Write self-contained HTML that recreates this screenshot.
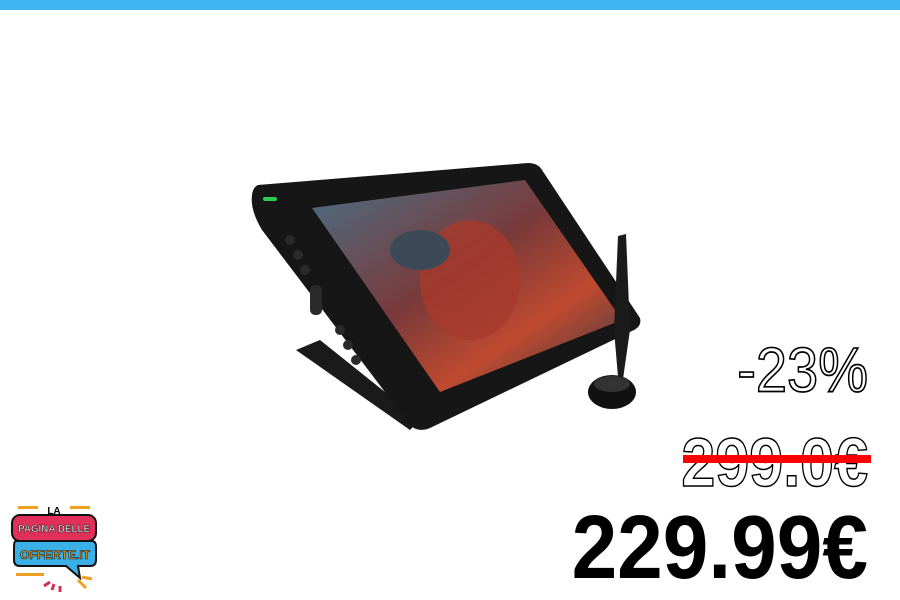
<!DOCTYPE html>
<html><head><style>
body{margin:0;width:900px;height:600px;background:#fff;overflow:hidden;position:relative;font-family:"Liberation Sans",sans-serif}
.bar{position:absolute;left:0;top:0;width:900px;height:10px;background:#3fb6f2}
.t{position:absolute;right:32px;font-weight:bold;color:#fff;-webkit-text-stroke:1.3px #000;text-align:right;white-space:nowrap;transform-origin:right top;line-height:1}
</style></head><body>
<div class="bar"></div>
<svg width="900" height="600" style="position:absolute;left:0;top:0">
<defs><linearGradient id="sc" x1="0" y1="0" x2="1" y2="1">
<stop offset="0" stop-color="#4a6f86"/><stop offset="0.45" stop-color="#7a3a3a"/><stop offset="0.7" stop-color="#c04a30"/><stop offset="1" stop-color="#2a3a48"/></linearGradient></defs>
<polygon points="296,350 320,340 420,420 410,430" fill="#1a1a1a"/>
<path d="M258,185 L528,163 Q538,163 542,170 L640,318 Q642,326 634,330 L430,428 Q418,433 410,425 L262,230 Q250,210 252,195 Q253,187 258,185Z" fill="#161616"/>
<polygon points="312,208 525,180 622,320 440,392" fill="url(#sc)"/>
<ellipse cx="470" cy="280" rx="50" ry="60" fill="#a83a2c" opacity="0.8"/>
<ellipse cx="420" cy="250" rx="30" ry="20" fill="#3c4a58"/>
<rect x="263" y="197" width="14" height="4" rx="2" fill="#2ecc55"/>
<g fill="#2a2a2a"><circle cx="290" cy="240" r="5"/><circle cx="298" cy="255" r="5"/><circle cx="305" cy="270" r="5"/><rect x="310" y="285" width="12" height="30" rx="5"/><circle cx="340" cy="330" r="5"/><circle cx="348" cy="345" r="5"/><circle cx="356" cy="360" r="5"/></g>
<polygon points="618,236 626,234 630,330 620,400 614,330" fill="#1b1b1b"/>
<ellipse cx="612" cy="392" rx="24" ry="17" fill="#111"/>
<ellipse cx="612" cy="384" rx="18" ry="8" fill="#333"/>
<g font-family="Liberation Sans" font-weight="bold">
<rect x="18" y="506" width="20" height="3" fill="#f0a020"/><rect x="70" y="506" width="20" height="3" fill="#f0a020"/>
<text x="54" y="514" font-size="10" text-anchor="middle" fill="#000">LA</text>
<rect x="12" y="515" width="84" height="26" rx="8" fill="#e0305a" stroke="#111" stroke-width="2"/>
<text x="54" y="532" font-size="10" text-anchor="middle" fill="#fff" stroke="#111" stroke-width="0.5" textLength="72" lengthAdjust="spacingAndGlyphs">PAGINA DELLE</text>
<path d="M16,541 H92 Q96,541 96,547 V560 Q96,566 90,566 H78 L80,578 L66,566 H20 Q14,566 14,560 V547 Q14,541 16,541Z" fill="#3ab0e6" stroke="#111" stroke-width="2"/>
<text x="55" y="559" font-size="12" text-anchor="middle" fill="#f0a020" stroke="#111" stroke-width="0.6" textLength="70" lengthAdjust="spacingAndGlyphs">OFFERTE.IT</text>
<rect x="16" y="573" width="28" height="3" fill="#f0a020"/>
<path d="M44,586 l6,-4 M52,590 l2,-6 M60,592 v-6" stroke="#d03050" stroke-width="3"/>
<path d="M78,580 l8,8 M82,577 l10,2" stroke="#f0a020" stroke-width="3"/>
</g>
</svg>
<div class="t" style="top:339px;font-size:56px;font-weight:normal;-webkit-text-stroke:1.5px #000;transform:scaleY(1.12)">-23%</div>
<div class="t" style="top:429px;font-size:61px;transform:scaleY(1.12)">299.0€</div>
<div style="position:absolute;left:683px;top:455px;width:188px;height:8px;background:#f00"></div>
<div class="t" style="top:503px;font-size:82px;color:#000;-webkit-text-stroke:0;transform:scaleY(1.1)">229.99€</div>
</body></html>
